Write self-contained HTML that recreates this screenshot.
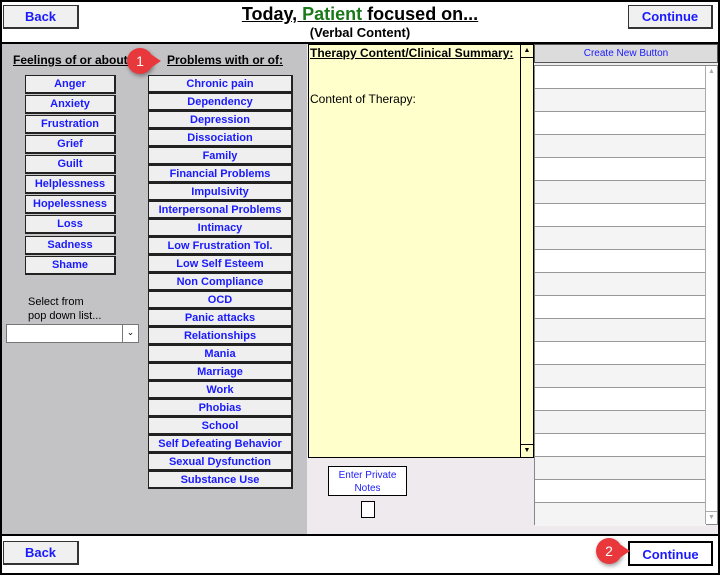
<!DOCTYPE html>
<html><head><meta charset="utf-8"><style>
*{box-sizing:border-box;margin:0;padding:0}
body{width:720px;height:575px;position:relative;background:#000;font-family:"Liberation Sans",Arial,sans-serif;overflow:hidden}
.a{position:absolute}
.btn{position:absolute;background:#efefef;border:1px solid #222;border-right-width:2px;border-bottom-width:2px;color:#1a1aff;font-weight:bold;font-size:11px;text-align:center;line-height:15px}
.tb{position:absolute;background:#f0f0f0;border:1px solid #333;border-right-width:2px;border-bottom-width:2px;color:#1a1aff;font-weight:bold;font-size:13px;text-align:center}
.hd{font-weight:bold;font-size:12px;text-decoration:underline;color:#000}
.badge{position:absolute;width:26px;height:26px;border-radius:50%;background:#e8383c;color:#fff;font-size:14px;text-align:center;line-height:26px;box-shadow:1px 2px 4px rgba(0,0,0,.4)}
.badge:after{content:"";position:absolute;left:22px;top:5px;border-left:12px solid #e8383c;border-top:8px solid transparent;border-bottom:8px solid transparent}
.row{height:23px;border-bottom:1px solid #999}
.f{width:91px;height:19px;line-height:17px}
</style></head><body>
<div class="a" style="left:2px;top:2px;width:716px;height:40px;background:#fff"></div>
<div class="a" style="left:2px;top:44px;width:305px;height:490px;background:#c3c2c5"></div>
<div class="a" style="left:307px;top:44px;width:411px;height:490px;background:#eeeaee"></div>
<div class="a" style="left:2px;top:536px;width:716px;height:37px;background:#fff"></div>

<div class="tb" style="left:3px;top:5px;width:76px;height:24px;line-height:22px">Back</div>
<div class="tb" style="left:628px;top:5px;width:85px;height:24px;line-height:22px">Continue</div>
<div class="a" style="left:0;width:720px;top:4px;text-align:center;font-weight:bold;font-size:18px"><span style="text-decoration:underline">Today, <span style="color:#1a7a1a">Patient</span> focused on...</span></div>
<div class="a" style="left:0;width:720px;top:25px;text-align:center;font-weight:bold;font-size:13px">(Verbal Content)</div>

<div class="a hd" style="left:13px;top:53px">Feelings of or about:</div>
<div class="a hd" style="left:167px;top:53px">Problems with or of:</div>
<div class="badge" style="left:127px;top:48px">1</div>

<div class="btn f" style="left:25px;top:75px">Anger</div>
<div class="btn f" style="left:25px;top:95px">Anxiety</div>
<div class="btn f" style="left:25px;top:115px">Frustration</div>
<div class="btn f" style="left:25px;top:135px">Grief</div>
<div class="btn f" style="left:25px;top:155px">Guilt</div>
<div class="btn f" style="left:25px;top:175px">Helplessness</div>
<div class="btn f" style="left:25px;top:195px">Hopelessness</div>
<div class="btn f" style="left:25px;top:215px">Loss</div>
<div class="btn f" style="left:25px;top:236px">Sadness</div>
<div class="btn f" style="left:25px;top:256px">Shame</div>

<div class="a" style="left:28px;top:295px;font-size:11px;line-height:14px">Select from<br>pop down list...</div>
<div class="a" style="left:6px;top:324px;width:133px;height:19px;background:#fff;border:1px solid #777"><div class="a" style="right:0;top:0;width:16px;height:17px;border-left:1px solid #777;font-size:9px;text-align:center;line-height:15px">&#8964;</div></div>

<div style="position:absolute;left:148px;top:75px">
<div class="btn" style="position:relative;width:145px;height:18px;line-height:16px">Chronic pain</div>
<div class="btn" style="position:relative;width:145px;height:18px;line-height:16px">Dependency</div>
<div class="btn" style="position:relative;width:145px;height:18px;line-height:16px">Depression</div>
<div class="btn" style="position:relative;width:145px;height:18px;line-height:16px">Dissociation</div>
<div class="btn" style="position:relative;width:145px;height:18px;line-height:16px">Family</div>
<div class="btn" style="position:relative;width:145px;height:18px;line-height:16px">Financial Problems</div>
<div class="btn" style="position:relative;width:145px;height:18px;line-height:16px">Impulsivity</div>
<div class="btn" style="position:relative;width:145px;height:18px;line-height:16px">Interpersonal Problems</div>
<div class="btn" style="position:relative;width:145px;height:18px;line-height:16px">Intimacy</div>
<div class="btn" style="position:relative;width:145px;height:18px;line-height:16px">Low Frustration Tol.</div>
<div class="btn" style="position:relative;width:145px;height:18px;line-height:16px">Low Self Esteem</div>
<div class="btn" style="position:relative;width:145px;height:18px;line-height:16px">Non Compliance</div>
<div class="btn" style="position:relative;width:145px;height:18px;line-height:16px">OCD</div>
<div class="btn" style="position:relative;width:145px;height:18px;line-height:16px">Panic attacks</div>
<div class="btn" style="position:relative;width:145px;height:18px;line-height:16px">Relationships</div>
<div class="btn" style="position:relative;width:145px;height:18px;line-height:16px">Mania</div>
<div class="btn" style="position:relative;width:145px;height:18px;line-height:16px">Marriage</div>
<div class="btn" style="position:relative;width:145px;height:18px;line-height:16px">Work</div>
<div class="btn" style="position:relative;width:145px;height:18px;line-height:16px">Phobias</div>
<div class="btn" style="position:relative;width:145px;height:18px;line-height:16px">School</div>
<div class="btn" style="position:relative;width:145px;height:18px;line-height:16px">Self Defeating Behavior</div>
<div class="btn" style="position:relative;width:145px;height:18px;line-height:16px">Sexual Dysfunction</div>
<div class="btn" style="position:relative;width:145px;height:18px;line-height:16px">Substance Use</div>
</div>

<div class="a" style="left:308px;top:44px;width:226px;height:414px;background:#ffffcc;border:1px solid #000">
<div class="a hd" style="left:1px;top:1px">Therapy Content/Clinical Summary:</div>
<div class="a" style="left:1px;top:47px;font-size:12px">Content of Therapy:</div>
<div class="a" style="right:0;top:0;width:13px;height:412px;border-left:1px solid #000">
<div style="height:13px;border-bottom:1px solid #000;font-size:7px;text-align:center;line-height:12px">&#9650;</div>
<div class="a" style="bottom:0;width:12px;height:13px;border-top:1px solid #000;font-size:7px;text-align:center;line-height:12px">&#9660;</div></div>
</div>

<div class="a" style="left:534px;top:44px;width:184px;height:19px;background:#dcdcdc;border:1px solid #555;color:#1a1aff;font-size:10px;text-align:center;line-height:17px">Create New Button</div>
<div class="a" style="left:534px;top:65px;width:184px;height:460px;background:#fff;border:1px solid #888">
<div class="a" style="left:0;top:0;width:171px">
<div class="row" style="background:#fff"></div><div class="row" style="background:#f4f4f4"></div>
<div class="row" style="background:#fff"></div><div class="row" style="background:#f4f4f4"></div>
<div class="row" style="background:#fff"></div><div class="row" style="background:#f4f4f4"></div>
<div class="row" style="background:#fff"></div><div class="row" style="background:#f4f4f4"></div>
<div class="row" style="background:#fff"></div><div class="row" style="background:#f4f4f4"></div>
<div class="row" style="background:#fff"></div><div class="row" style="background:#f4f4f4"></div>
<div class="row" style="background:#fff"></div><div class="row" style="background:#f4f4f4"></div>
<div class="row" style="background:#fff"></div><div class="row" style="background:#f4f4f4"></div>
<div class="row" style="background:#fff"></div><div class="row" style="background:#f4f4f4"></div>
<div class="row" style="background:#fff"></div><div class="row" style="background:#f4f4f4;border-bottom:none"></div>
</div>
<div class="a" style="right:0;top:0;width:12px;height:458px;border-left:1px solid #aaa;color:#aaa;font-size:7px;text-align:center">
<div style="line-height:12px">&#9650;</div><div class="a" style="bottom:0;width:11px;line-height:12px;border-top:1px solid #aaa">&#9660;</div></div>
</div>

<div class="a" style="left:328px;top:466px;width:79px;height:30px;background:#fff;border:1px solid #000;color:#1a1aff;font-size:10px;text-align:center;line-height:13px;padding-top:2px">Enter Private<br>Notes</div>
<div class="a" style="left:361px;top:501px;width:14px;height:17px;background:#fff;border:1px solid #000"></div>

<div class="tb" style="left:3px;top:541px;width:76px;height:24px;line-height:22px">Back</div>
<div class="tb" style="left:628px;top:541px;width:85px;height:25px;line-height:23px;border:2px solid #000;background:#fff">Continue</div>
<div class="badge" style="left:596px;top:538px">2</div>
</body></html>
